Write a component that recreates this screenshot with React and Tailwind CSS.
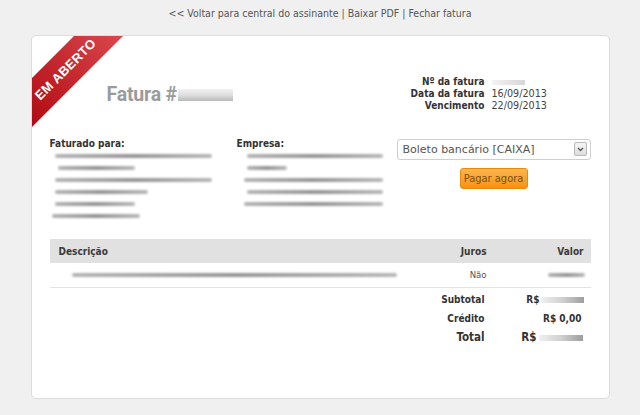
import { useState } from "react";

const body = "font-['DejaVu_Sans_Condensed','DejaVu_Sans',sans-serif]";

const billedLines = [
  "ml-[5px] w-[157px]",
  "ml-[8px] w-[77px]",
  "ml-[5px] w-[157px]",
  "ml-[5px] w-[93px]",
  "ml-[5px] w-[80px]",
  "ml-[2px] w-[88px]",
];

const companyLines = [
  "ml-[10px] w-[136px]",
  "ml-[10px] w-[40px]",
  "ml-[7px] w-[139px]",
  "ml-[10px] w-[136px]",
  "ml-[7px] w-[139px]",
];

// blurred-out personal data
function Smudge({ className = "" }) {
  return (
    <div
      className={`h-[4px] rounded-full bg-linear-to-r from-[#b4b4b4] via-[#969696] to-[#b8b8b8] blur-[0.8px] ${className}`}
    />
  );
}

// corner ribbon: band drawn in svg, label laid over it
function Ribbon() {
  return (
    <>
      <svg className="absolute left-0 top-0" width="92" height="92" viewBox="0 0 92 92">
        <defs>
          <linearGradient id="rib" x1="1" y1="0" x2="0" y2="1">
            <stop offset="0" stopColor="#da474d" />
            <stop offset="1" stopColor="#b00a12" />
          </linearGradient>
        </defs>
        <polygon points="42,0 91,0 0,91 0,42" fill="url(#rib)" />
      </svg>
      <div className="absolute left-[-5px] top-[25px] flex h-[16px] w-[76px] -rotate-45 items-center justify-center">
        <span className="whitespace-nowrap font-['Liberation_Sans',Arial,sans-serif] text-[13px] font-bold leading-none tracking-[0.3px] text-white">
          EM ABERTO
        </span>
      </div>
    </>
  );
}

function MetaRow({ label, children }) {
  return (
    <>
      <div className="text-right text-[10px] font-bold text-[#333]">{label}</div>
      <div className="text-[10.7px] text-[#444]">{children}</div>
    </>
  );
}

export default function App() {
  const [gateway, setGateway] = useState("caixa");

  return (
    <div className={`min-h-[415px] w-full bg-[#f0f0f0] pt-[6px] ${body}`}>
      <div className="text-center text-[10.5px] leading-[14px] text-[#555]">
        <a href="#">&lt;&lt; Voltar para central do assinante</a> | <a href="#">Baixar PDF</a> |{" "}
        <a href="#">Fechar fatura</a>
      </div>

      <div className="relative mx-auto mt-[15px] w-[579px] overflow-hidden rounded-[5px] border border-[#dcdcdc] bg-white px-[18px] pb-[51px] pt-[38px]">
        <Ribbon />

        {/* header */}
        <div className="flex items-center justify-between">
          <div className="ml-[57px] mt-[4px] flex items-center">
            <span className="font-['Roboto',sans-serif] text-[19.5px] font-bold leading-none tracking-[-0.2px] text-[#9b9b9b]">
              Fatura #
            </span>
            <div className="ml-[1px] h-[12px] w-[55px] bg-linear-to-b from-[#f2f2f2] via-[#dedede] to-[#b9b9b9] blur-[0.6px]" />
          </div>
          <div className="mr-[39px] mt-[2px] grid grid-cols-[auto_60px] gap-x-[7px] leading-[12px]">
            <MetaRow label="Nº da fatura">
              <div className="mt-[4px] h-[5px] w-[33px] bg-linear-to-r from-[#f4f4f4] to-[#d6d6d6] blur-[0.5px]" />
            </MetaRow>
            <MetaRow label="Data da fatura">16/09/2013</MetaRow>
            <MetaRow label="Vencimento">22/09/2013</MetaRow>
          </div>
        </div>

        {/* billing */}
        <div className="mt-[26px] grid grid-cols-[187px_160px_194px] text-[10px] leading-[12px]">
          <div>
            <div className="font-bold text-[#333]">Faturado para:</div>
            {billedLines.map((c, i) => (
              <div key={i} className="flex h-[12px] items-center">
                <Smudge className={c} />
              </div>
            ))}
          </div>
          <div>
            <div className="font-bold text-[#333]">Empresa:</div>
            {companyLines.map((c, i) => (
              <div key={i} className="flex h-[12px] items-center">
                <Smudge className={c} />
              </div>
            ))}
          </div>
          <div className="flex flex-col items-center">
            <div className="relative mt-[1px] h-[21px] w-[194px]">
              <select
                value={gateway}
                onChange={(e) => setGateway(e.target.value)}
                className="h-full w-full appearance-none rounded-[3px] border border-[#cfcfcf] bg-white pl-[5px] font-['DejaVu_Sans',sans-serif] text-[11px] text-[#555] outline-none"
              >
                <option value="caixa">Boleto bancário [CAIXA]</option>
              </select>
              <div className="pointer-events-none absolute right-[4px] top-[3px] flex h-[14px] w-[13px] items-center justify-center rounded-[2px] border border-[#b9b9b9] bg-linear-to-b from-[#f6f6f6] to-[#dcdcdc]">
                <svg width="7" height="5" viewBox="0 0 7 5">
                  <polyline points="1,1 3.5,3.5 6,1" fill="none" stroke="#555" strokeWidth="1.3" />
                </svg>
              </div>
            </div>
            <button className="mt-[8px] h-[21px] w-[68px] rounded-[3px] border border-[#e58a0c] bg-linear-to-b from-[#fbb54a] to-[#f39406] text-[11px] text-[#7d4f12]">
              Pagar agora
            </button>
          </div>
        </div>

        {/* items */}
        <div className="mt-[17px] text-[10px]">
          <div className="grid h-[24px] grid-cols-[minmax(0,1fr)_100px_104px] items-center bg-[#e1e1e1] font-bold text-[#3a3a3a]">
            <div className="pl-[9px]">Descrição</div>
            <div className="text-right">Juros</div>
            <div className="pr-[7px] text-right">Valor</div>
          </div>
          <div className="grid h-[25px] grid-cols-[minmax(0,1fr)_100px_104px] items-center border-b border-[#e2e2e2]">
            <div>
              <Smudge className="ml-[22px] w-[325px]" />
            </div>
            <div className="text-right text-[9.5px] text-[#555]">Não</div>
            <div className="flex justify-end pr-[6px]">
              <Smudge className="w-[37px]" />
            </div>
          </div>

          <div className="pt-[2px] font-bold text-[#333]">
            <div className="grid h-[19px] grid-cols-[minmax(0,1fr)_104px] items-center">
              <div className="pr-[2px] text-right">Subtotal</div>
              <div className="flex items-center justify-end pr-[7px]">
                R$
                <div className="ml-[1px] h-[6px] w-[43px] bg-linear-to-r from-[#f0f0f0] via-[#d0d0d0] to-[#9e9e9e] blur-[0.6px]" />
              </div>
            </div>
            <div className="grid h-[19px] grid-cols-[minmax(0,1fr)_104px] items-center">
              <div className="pr-[2px] text-right">Crédito</div>
              <div className="pr-[9px] text-right">R$ 0,00</div>
            </div>
            <div className="grid h-[19px] grid-cols-[minmax(0,1fr)_104px] items-center text-[11.5px]">
              <div className="pr-[2px] text-right">Total</div>
              <div className="flex items-center justify-end pr-[8px]">
                R$
                <div className="ml-[2px] h-[6px] w-[44px] bg-linear-to-r from-[#f0f0f0] via-[#d0d0d0] to-[#9e9e9e] blur-[0.6px]" />
              </div>
            </div>
          </div>
        </div>
      </div>
    </div>
  );
}
